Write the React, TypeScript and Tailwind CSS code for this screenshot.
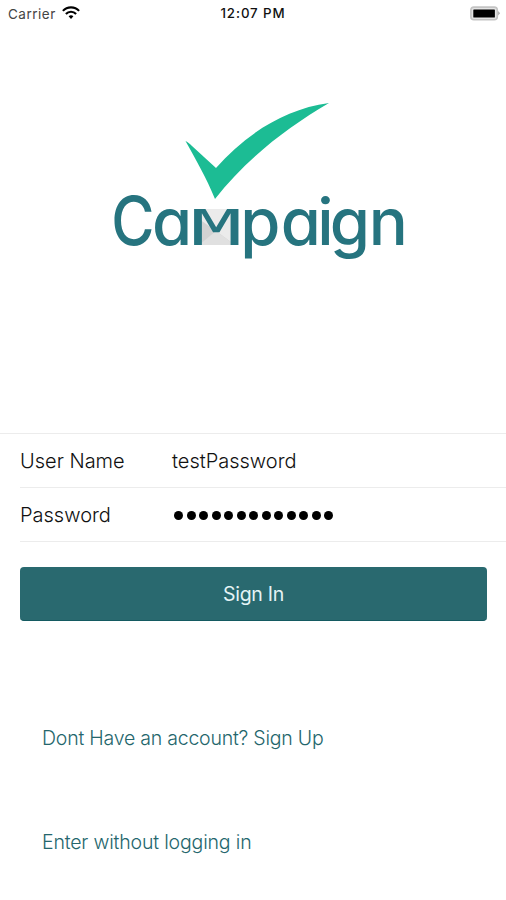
import type { ReactNode } from 'react';

function StatusBar() {
  return (
    <header className="grid h-7 grid-cols-3 items-center px-2 text-[13px] text-black">
      <div className="flex items-center gap-[6px]">
        <span className="text-[13.5px] font-normal tracking-[0.5px] text-[#444]">Carrier</span>
        <svg className="-mt-[2px]" width="18" height="14" viewBox="0 0 18 14" fill="none" stroke="#000" strokeWidth="2.1">
          <path d="M0.9 4.9 C5.2 0.2 12.8 0.2 17.1 4.9" />
          <path d="M3.9 8 C6.6 5 11.4 5 14.1 8" />
          <path d="M6.6 10.2 C8 8.9 10 8.9 11.4 10.2 L9 12.9 Z" fill="#000" stroke="none" />
        </svg>
      </div>
      <span className="text-center text-[13.3px] font-medium tracking-[0.9px] text-[#111]">12:07 PM</span>
      <svg className="-mt-[2px] -mr-[2px] ml-auto" width="30" height="15" viewBox="0 0 30 15">
        <rect x="0.9" y="1.1" width="26.4" height="12.6" rx="3" fill="#e4e4e4" stroke="#c4c4c4" strokeWidth="1.6" />
        <rect x="3.3" y="3.5" width="21.6" height="8" rx="0.6" fill="#000" />
        <path d="M28.2 5 L30 7.3 L28.2 9.6 Z" fill="#a5a5a5" />
      </svg>
    </header>
  );
}

function Logo() {
  return (
    <svg className="mx-auto block" width="320" height="190" viewBox="100 90 320 190">
      <path
        d="M185.5 141 C188 142 190 144 192 146 L216 168 C245 135 284 109 329 103 C288 127 247 158 215 199 C206 177 196 160 185.5 141 Z"
        fill="#1cbc94"
      />
      <rect x="196" y="209" width="41" height="36" fill="#ebebeb" />
      <path d="M199 219 L216 231 L235 245 L199 245 Z" fill="#d2d2d2" />
      <path d="M199 245 L216 231 L235 245 Z" fill="#e0e0e0" />
      <g fill="#26747f">
        <text
          className="font-['Inter',sans-serif] text-[67px] font-medium"
          transform="translate(111.2 244.8) scale(0.88 1)"
        >
          C
        </text>
        <text
          className="font-['Inter',sans-serif] text-[65px] font-medium [font-feature-settings:'cv11']"
          x="152"
          y="244.8"
        >
          a
        </text>
        <text
          className="font-['DejaVu_Sans_Mono',monospace] text-[49px]"
          transform="translate(190.5 245) scale(1.75 1)"
        >
          M
        </text>
        <text
          className="font-['Inter',sans-serif] text-[65px] font-medium [font-feature-settings:'cv11']"
          x="240.3 280.7 317.3 329.7 368.7"
          y="244.8"
        >
          paign
        </text>
      </g>
    </svg>
  );
}

function Field({ label, children }: { label: string; children: ReactNode }) {
  return (
    <div className="ml-5 flex h-[54px] items-center border-b border-[#ececec]">
      <span className="w-[152px]">{label}</span>
      {children}
    </div>
  );
}

export default function App() {
  return (
    <div className="flex h-[900px] w-[506px] flex-col overflow-hidden bg-white font-['Inter',sans-serif] text-[20px] font-light">
      <StatusBar />
      <div className="mt-[62px] mr-[-14px]">
        <Logo />
      </div>

      <div className="mt-[153px] border-t border-[#ececec] text-[#111]">
        <Field label="User Name">
          <span>testPassword</span>
        </Field>
        <Field label="Password">
          <span className="flex gap-[3.5px] pt-px pl-[2px]">
            {Array.from({ length: 13 }, (_, i) => (
              <i key={i} className="size-[9px] rounded-full bg-black" />
            ))}
          </span>
        </Field>
      </div>

      <button className="mx-5 mt-[25px] mr-[19px] h-[54px] rounded-[4px] border-b border-[#145a61] bg-[#29696f] pt-[3px] text-[19.5px] font-normal tracking-[-0.3px] text-[#e4f3f5]">
        Sign In
      </button>

      <a href="#" className="mt-[103px] ml-[42px] text-[19.5px] tracking-[-0.22px] text-[#24666c]">
        Dont Have an account? Sign Up
      </a>
      <a href="#" className="mt-[75px] ml-[42px] text-[19.5px] tracking-[-0.17px] text-[#24666c]">
        Enter without logging in
      </a>
    </div>
  );
}
